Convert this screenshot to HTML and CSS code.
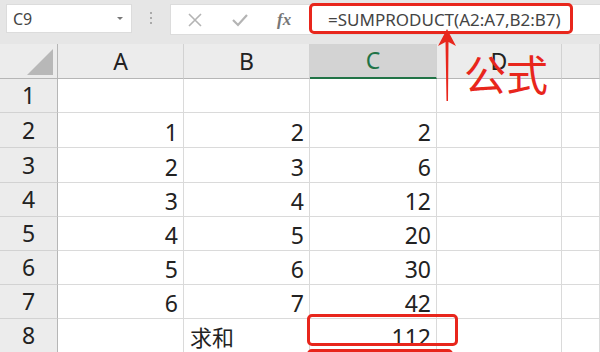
FILE: index.html
```html
<!DOCTYPE html>
<html lang="zh-CN">
<head>
    <meta charset="UTF-8">
    <title>SUMPRODUCT</title>
    <link rel="stylesheet" href="styles.css">
</head>
<body>
    <div class="app">
        <div class="toolbar">
            <div class="name-box">
                <span>C9</span>
                <span class="caret"></span>
            </div>
            <div class="grip"><i></i><i></i><i></i></div>
            <div class="formula-bar">
                <div class="fx-icons">
                    <svg class="icon" width="16" height="16" viewBox="0 0 16 16"><path d="M2 2 L14 14 M14 2 L2 14" stroke="#b4b4b4" stroke-width="1.6" fill="none"/></svg>
                    <svg class="icon" width="18" height="16" viewBox="0 0 18 16"><path d="M2 8 L7 13 L16 3" stroke="#b4b4b4" stroke-width="2.2" fill="none"/></svg>
                    <span class="fx">fx</span>
                </div>
                <div class="formula">=SUMPRODUCT(A2:A7,B2:B7)</div>
            </div>
        </div>

        <div class="sheet">
            <div class="hd corner">
                <svg width="26" height="26" viewBox="0 0 26 26"><polygon points="26,0 26,26 0,26" fill="#b8b8b8"/></svg>
            </div>
            <div class="hd col">A</div>
            <div class="hd col">B</div>
            <div class="hd col active">C</div>
            <div class="hd col">D</div>
            <div class="hd col"></div>

            <div class="hd row">1</div>
            <div class="cell"></div><div class="cell"></div><div class="cell"></div><div class="cell"></div><div class="cell"></div>

            <div class="hd row">2</div>
            <div class="cell">1</div><div class="cell">2</div><div class="cell">2</div><div class="cell"></div><div class="cell"></div>

            <div class="hd row">3</div>
            <div class="cell">2</div><div class="cell">3</div><div class="cell">6</div><div class="cell"></div><div class="cell"></div>

            <div class="hd row">4</div>
            <div class="cell">3</div><div class="cell">4</div><div class="cell">12</div><div class="cell"></div><div class="cell"></div>

            <div class="hd row">5</div>
            <div class="cell">4</div><div class="cell">5</div><div class="cell">20</div><div class="cell"></div><div class="cell"></div>

            <div class="hd row">6</div>
            <div class="cell">5</div><div class="cell">6</div><div class="cell">30</div><div class="cell"></div><div class="cell"></div>

            <div class="hd row">7</div>
            <div class="cell">6</div><div class="cell">7</div><div class="cell">42</div><div class="cell"></div><div class="cell"></div>

            <div class="hd row">8</div>
            <div class="cell"></div><div class="cell text">求和</div><div class="cell">112</div><div class="cell"></div><div class="cell"></div>
        </div>

        <div class="mark mark-formula"></div>
        <div class="mark mark-result"></div>
        <div class="mark mark-next"></div>
        <svg class="arrow" width="24" height="74" viewBox="0 0 24 74">
            <polygon points="11,0 20,17 12.5,13 12,72 10.5,72 9.5,13 2,17" fill="#e8261c"/>
        </svg>
        <div class="note">公式</div>
    </div>
</body>
</html>
```

FILE: styles.css
```css
body {
    margin: 0;
    font-family: "Noto Sans", "Noto Sans CJK SC", sans-serif;
    background-color: #fff;
}

.app {
    position: relative;
    width: 600px;
    height: 352px;
    overflow: hidden;
}

.toolbar {
    display: flex;
    align-items: flex-start;
    height: 44px;
    padding: 4px 0 0 6px;
    box-sizing: border-box;
    background-color: #e6e6e6;
}

.name-box {
    display: flex;
    align-items: center;
    justify-content: space-between;
    width: 126px;
    height: 29px;
    padding: 0 8px 0 6px;
    box-sizing: border-box;
    background: #fff;
    border: 1px solid #dcdcdc;
    color: #444;
    font-size: 16px;
}

.caret {
    width: 0;
    height: 0;
    border-left: 3px solid transparent;
    border-right: 3px solid transparent;
    border-top: 3px solid #777;
}

.grip {
    display: flex;
    flex-direction: column;
    gap: 3px;
    width: 38px;
    padding-top: 8px;
    align-items: center;
}

.grip i {
    width: 2px;
    height: 2px;
    background: #aaa;
}

.formula-bar {
    display: flex;
    align-items: center;
    flex: 1;
    height: 29px;
    background: #fff;
    border: 1px solid #dcdcdc;
    border-right: none;
}

.fx-icons {
    display: flex;
    align-items: center;
    gap: 28px;
    width: 140px;
    padding-left: 16px;
    box-sizing: border-box;
}

.fx {
    font-family: "Liberation Serif", serif;
    font-style: italic;
    font-weight: bold;
    font-size: 17px;
    color: #777;
}

.formula {
    padding-left: 17px;
    font-size: 17px;
    color: #444;
}

.sheet {
    display: grid;
    grid-template-columns: 58px 126px 126px 127px 125px 38px;
    grid-template-rows: 35px 34px 35px 35px 34px 34px 34px 34px 34px;
}

.hd {
    background: #ececec;
    color: #222;
    font-size: 23px;
    display: flex;
    align-items: flex-end;
    justify-content: center;
    padding-bottom: 1px;
    box-sizing: border-box;
}

.col {
    border-right: 1px solid #d2d2d2;
    border-bottom: 1px solid #b6b6b6;
}

.col.active {
    background: #d3d3d3;
    color: #217346;
    border-bottom: 2px solid #217346;
}

.corner {
    border-right: 1px solid #b6b6b6;
    border-bottom: 1px solid #b6b6b6;
    justify-content: flex-end;
    padding: 0 4px 3px 0;
}

.row {
    border-right: 1px solid #b6b6b6;
    border-bottom: 1px solid #d2d2d2;
}

.cell {
    border-right: 1px solid #dadada;
    border-bottom: 1px solid #dadada;
    display: flex;
    align-items: flex-end;
    justify-content: flex-end;
    padding: 0 5px 0 0;
    box-sizing: border-box;
    font-size: 23px;
    color: #222;
    line-height: 30px;
}

.cell.text {
    justify-content: flex-start;
    padding-left: 6px;
    font-size: 22px;
}

.mark {
    position: absolute;
    border: 3px solid #e8261c;
    border-radius: 5px;
    box-sizing: border-box;
}

.mark-formula {
    left: 309px;
    top: 3px;
    width: 264px;
    height: 31px;
}

.mark-result {
    left: 307px;
    top: 314px;
    width: 151px;
    height: 32px;
}

.mark-next {
    left: 307px;
    top: 349px;
    width: 146px;
    height: 30px;
}

.arrow {
    position: absolute;
    left: 436px;
    top: 29px;
}

.note {
    position: absolute;
    left: 464px;
    top: 52px;
    font-family: "Noto Sans CJK SC", sans-serif;
    font-size: 42px;
    line-height: 1;
    color: #e8261c;
}
```
